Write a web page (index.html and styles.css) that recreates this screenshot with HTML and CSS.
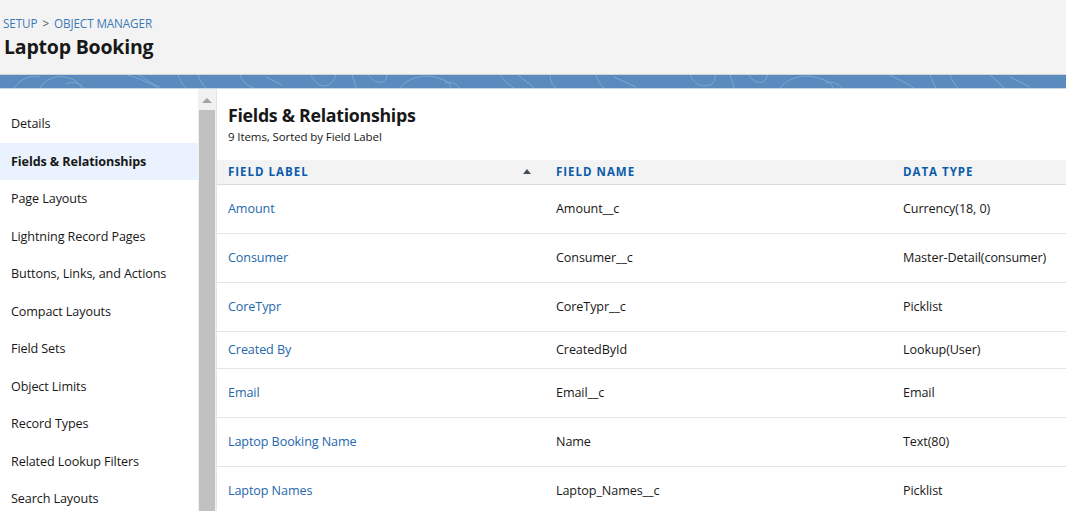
FILE: index.html
```html
<!DOCTYPE html>
<html>
<head>
<meta charset="utf-8">
<link rel="stylesheet" href="styles.css">
</head>
<body>
<header class="page-header">
  <div class="breadcrumb"><a>SETUP</a><span class="sep">&gt;</span><a>OBJECT MANAGER</a></div>
  <h1 class="title">Laptop Booking</h1>
</header>
<div class="band">
  <svg class="band-art" width="1066" height="13" viewBox="0 0 1066 13" preserveAspectRatio="none">
    <g fill="none" stroke="#7ea8d2" stroke-width="1">
      <path d="M14 13 C20 4 30 0 40 2"/>
      <path d="M40 13 C46 2 60 -1 72 4 C80 8 82 12 80 13"/>
      <path d="M65 9 C72 6 80 8 84 13"/>
      <path d="M128 0 C140 4 150 8 158 13"/>
      <path d="M138 -1 C146 4 150 8 160 12"/>
      <path d="M178 0 C180 5 182 9 186 13"/>
      <path d="M198 0 C200 5 202 10 206 13"/>
      <path d="M240 0 C242 6 246 10 254 13"/>
      <path d="M266 2 L282 10"/>
      <path d="M310 -2 C314 8 322 14 330 9 C336 4 336 0 334 -2"/>
      <path d="M352 0 C354 6 356 10 356 13"/>
      <path d="M368 -2 C372 8 382 10 386 4 L388 -2"/>
      <path d="M400 13 C410 0 430 -2 446 6 C450 9 452 12 450 13"/>
      <path d="M445 8 C452 6 456 9 460 13"/>
      <path d="M500 0 C504 5 508 9 514 13"/>
      <path d="M518 0 C524 5 530 9 534 13"/>
      <path d="M550 0 C550 5 552 10 556 13"/>
      <path d="M596 0 C598 5 600 10 604 13"/>
      <path d="M614 2 L636 12"/>
      <path d="M690 -2 C692 8 702 14 712 9 C716 4 716 0 714 -2"/>
      <path d="M730 0 C732 6 734 10 734 13"/>
      <path d="M748 -2 C752 8 762 10 766 4 L768 -2"/>
      <path d="M780 13 C790 0 810 -2 826 6 C832 9 834 12 832 13"/>
      <path d="M826 8 C834 6 838 9 842 13"/>
      <path d="M890 0 C900 5 908 9 914 13"/>
      <path d="M930 0 C932 5 934 9 936 13"/>
      <path d="M950 0 C952 5 954 9 958 13"/>
      <path d="M990 0 C996 5 1000 9 1004 13"/>
      <path d="M1010 2 L1030 12"/>
    </g>
  </svg>
</div>
<div class="layout">
  <nav class="sidebar">
    <ul class="nav-list">
      <li class="nav-item">Details</li>
      <li class="nav-item active">Fields &amp; Relationships</li>
      <li class="nav-item">Page Layouts</li>
      <li class="nav-item">Lightning Record Pages</li>
      <li class="nav-item">Buttons, Links, and Actions</li>
      <li class="nav-item">Compact Layouts</li>
      <li class="nav-item">Field Sets</li>
      <li class="nav-item">Object Limits</li>
      <li class="nav-item">Record Types</li>
      <li class="nav-item">Related Lookup Filters</li>
      <li class="nav-item">Search Layouts</li>
    </ul>
  </nav>
  <div class="scrollbar">
    <div class="scroll-arrow"></div>
    <div class="scroll-thumb"></div>
  </div>
  <main class="main">
    <h2 class="section-title">Fields &amp; Relationships</h2>
    <div class="section-sub">9 Items, Sorted by Field Label</div>
    <table class="grid">
      <colgroup>
        <col class="c1"><col class="c2"><col class="c3">
      </colgroup>
      <thead>
        <tr>
          <th><div class="th-inner"><span>FIELD LABEL</span><span class="sort-arrow"></span></div></th>
          <th>FIELD NAME</th>
          <th>DATA TYPE</th>
        </tr>
      </thead>
      <tbody>
        <tr><td class="link">Amount</td><td>Amount__c</td><td>Currency(18, 0)</td></tr>
        <tr><td class="link">Consumer</td><td>Consumer__c</td><td>Master-Detail(consumer)</td></tr>
        <tr><td class="link">CoreTypr</td><td>CoreTypr__c</td><td>Picklist</td></tr>
        <tr class="short"><td class="link">Created By</td><td>CreatedById</td><td>Lookup(User)</td></tr>
        <tr><td class="link">Email</td><td>Email__c</td><td>Email</td></tr>
        <tr><td class="link">Laptop Booking Name</td><td>Name</td><td>Text(80)</td></tr>
        <tr><td class="link">Laptop Names</td><td>Laptop_Names__c</td><td>Picklist</td></tr>
      </tbody>
    </table>
  </main>
</div>
</body>
</html>
```
FILE: styles.css
```css
* { box-sizing: border-box; }
html, body {
  margin: 0;
  padding: 0;
  width: 1066px;
  height: 511px;
  overflow: hidden;
  background: #fff;
  font-family: "Open Sans", "Noto Sans", sans-serif;
  color: #181818;
}
.page-header {
  height: 75px;
  background: #f3f3f3;
  border-bottom: 1px solid #d4d4d4;
  padding: 14px 0 0 3px;
}
.breadcrumb {
  font-size: 11.7px;
  line-height: 18px;
  color: #3b7ab8;
  display: flex;
  gap: 4px;
  letter-spacing: -0.1px;
}
.breadcrumb .sep { color: #555; padding: 0 1px; }
.title {
  margin: 2px 0 0 1px;
  font-size: 19.5px;
  font-weight: 700;
  line-height: 26px;
  color: #181818;
  letter-spacing: -0.2px;
}
.band {
  height: 14px;
  background: #5a8bbf;
  border-bottom: 1px solid #c8d6e4;
  overflow: hidden;
}
.band-art { display: block; }
.layout {
  display: flex;
  height: 423px;
}
.sidebar {
  width: 198px;
  flex: none;
  padding-top: 16px;
}
.nav-list { list-style: none; margin: 0; padding: 0; }
.nav-item {
  height: 37.5px;
  display: flex;
  align-items: center;
  padding-left: 11px;
  font-size: 12.6px;
  color: #181818;
  letter-spacing: -0.1px;
  white-space: nowrap;
}
.nav-item.active {
  background: #eaf3fd;
  font-weight: 700;
}
.scrollbar {
  width: 18px;
  flex: none;
  background: #f1f1f1;
  display: flex;
  flex-direction: column;
  align-items: center;
}
.scroll-arrow {
  margin-top: 9px;
  width: 0; height: 0;
  border-left: 5px solid transparent;
  border-right: 5px solid transparent;
  border-bottom: 5px solid #a3a3a3;
}
.scroll-thumb {
  margin-top: 7px;
  width: 16px;
  flex: 1;
  background: #c1c1c1;
}
.main {
  flex: 1;
  border-left: 1px solid #e5e5e5;
  padding-top: 14px;
  min-width: 0;
}
.section-title {
  margin: 0 0 0 11px;
  font-size: 17.8px;
  line-height: 24px;
  font-weight: 700;
  letter-spacing: -0.3px;
  color: #181818;
}
.section-sub {
  margin: 0 0 0 11px;
  font-size: 11.5px;
  line-height: 20px;
  color: #181818;
  letter-spacing: -0.1px;
}
.grid {
  margin-top: 13px;
  width: 100%;
  border-collapse: collapse;
  table-layout: fixed;
}
.c1 { width: 328px; }
.c2 { width: 347px; }
.grid th {
  height: 24px;
  background: #f3f3f3;
  border-bottom: 1px solid #dddbda;
  text-align: left;
  font-size: 11.5px;
  font-weight: 700;
  letter-spacing: 1px;
  color: #0b5cab;
  padding: 0 11px;
}
.th-inner { display: flex; align-items: center; justify-content: space-between; padding-right: 3px; }
.sort-arrow {
  width: 0; height: 0;
  border-left: 4px solid transparent;
  border-right: 4px solid transparent;
  border-bottom: 5px solid #444e5a;
  margin-top: -1px;
}
.grid td {
  height: 49px;
  border-bottom: 1px solid #e5e5e5;
  padding: 0 11px;
  font-size: 12.6px;
  letter-spacing: -0.1px;
  color: #181818;
  white-space: nowrap;
}
.grid tr.short td { height: 37px; }
.grid td.link { color: #2567ad; }
```
